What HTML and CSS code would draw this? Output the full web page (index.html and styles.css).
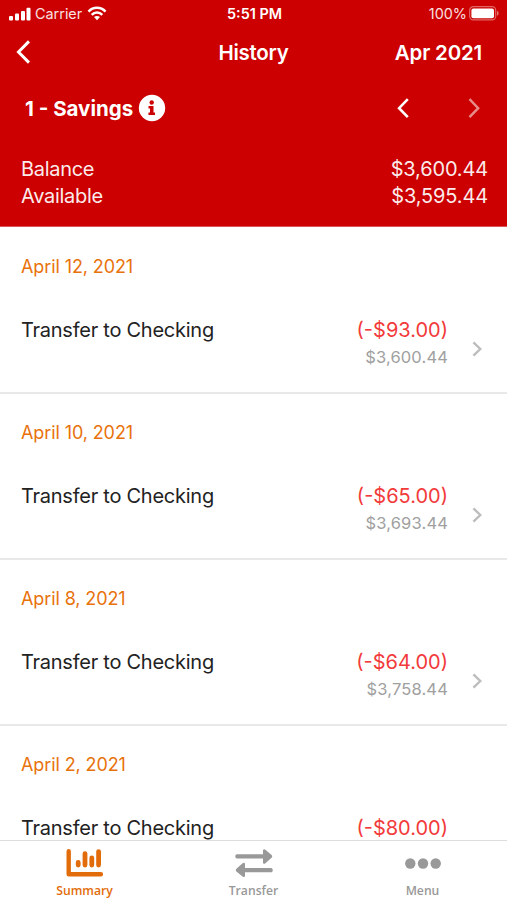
FILE: index.html
```
<!DOCTYPE html>
<html lang="en">
<head>
  <meta charset="UTF-8" />
  <meta name="viewport" content="width=device-width, initial-scale=1.0"/>
  <title>History</title>
  <link rel="stylesheet" href="styles.css">
</head>
<body>
  <header>
    <div class="status-bar">
      <div class="carrier">
        <svg width="22" height="14" viewBox="0 0 22 14" fill="#fff">
          <rect x="0" y="9" width="4" height="4.5" rx="1"/>
          <rect x="6" y="6.5" width="4" height="7" rx="1"/>
          <rect x="12" y="4" width="4" height="9.5" rx="1"/>
          <rect x="17.5" y="0.7" width="4" height="12.8" rx="1"/>
        </svg>
        <span>Carrier</span>
        <svg width="20" height="15" viewBox="0 0 20 15" fill="none" stroke="#fff" stroke-width="2.5">
          <path d="M1.5 5.6C6.2.6 13.8.6 18.5 5.6"/>
          <path d="M4.7 8.8c3-3.1 7.6-3.1 10.6 0"/>
          <path d="M10 14.2l-3-3.1c1.7-1.6 4.3-1.6 6 0z" fill="#fff" stroke="none"/>
        </svg>
      </div>
      <div class="time">5:51 PM</div>
      <div class="battery">
        <span>100%</span>
        <svg width="31" height="15" viewBox="0 0 31 15">
          <rect x="0.7" y="0.7" width="26" height="13.2" rx="3.6" fill="none" stroke="#fff" stroke-opacity=".4" stroke-width="1.2"/>
          <rect x="2.4" y="2.4" width="22.6" height="9.8" rx="2" fill="#fff"/>
          <path d="M28 5v4.7c2.2-.6 2.2-4.1 0-4.7z" fill="#fff" fill-opacity=".45"/>
        </svg>
      </div>
    </div>

    <nav class="nav-bar">
      <svg class="back" width="18" height="26" viewBox="0 0 18 26" fill="none" stroke="#fff" stroke-width="3">
        <path d="M17 2.4L6.5 13 17 23.6"/>
      </svg>
      <h1>History</h1>
      <span class="month">Apr 2021</span>
    </nav>

    <div class="account">
      <h2>1 - Savings</h2>
      <svg class="info" width="28" height="28" viewBox="0 0 28 28">
        <circle cx="14" cy="14" r="13.2" fill="#fff"/>
        <circle cx="13.7" cy="8.5" r="2.2" fill="#c00"/>
        <path d="M10.5 12.1h5v6.4h1.5v2.4h-6.5v-2.4H12v-4h-1.5z" fill="#c00"/>
      </svg>
      <svg class="prev" width="14" height="22" viewBox="0 0 14 22" fill="none" stroke="#fff" stroke-width="2.6">
        <path d="M11.8 2.2L3.1 11.2l8.7 9"/>
      </svg>
      <svg class="next" width="14" height="22" viewBox="0 0 14 22" fill="none" stroke="#fff" stroke-width="2.4">
        <path d="M2.5 2.2l8.7 9-8.7 9"/>
      </svg>
    </div>

    <div class="balances">
      <div><span>Balance</span><span class="money">$3,600.44</span></div>
      <div><span>Available</span><span class="money">$3,595.44</span></div>
    </div>
  </header>

  <main>
    <section class="entry">
      <div class="date">April 12, 2021</div>
      <div class="name">Transfer to Checking</div>
      <div class="amounts"><div class="amount">(-$93.00)</div><div class="total">$3,600.44</div></div>
      <svg class="arrow" width="12" height="18" viewBox="0 0 12 18"><path d="M2.4 2.4L9.3 9l-6.9 6.6"/></svg>
    </section>
    <section class="entry">
      <div class="date">April 10, 2021</div>
      <div class="name">Transfer to Checking</div>
      <div class="amounts"><div class="amount">(-$65.00)</div><div class="total">$3,693.44</div></div>
      <svg class="arrow" width="12" height="18" viewBox="0 0 12 18"><path d="M2.4 2.4L9.3 9l-6.9 6.6"/></svg>
    </section>
    <section class="entry">
      <div class="date">April 8, 2021</div>
      <div class="name">Transfer to Checking</div>
      <div class="amounts"><div class="amount">(-$64.00)</div><div class="total">$3,758.44</div></div>
      <svg class="arrow" width="12" height="18" viewBox="0 0 12 18"><path d="M2.4 2.4L9.3 9l-6.9 6.6"/></svg>
    </section>
    <section class="entry">
      <div class="date">April 2, 2021</div>
      <div class="name">Transfer to Checking</div>
      <div class="amounts"><div class="amount">(-$80.00)</div></div>
    </section>
  </main>

  <footer class="tabs">
    <a class="tab active">
      <svg width="38" height="28" viewBox="0 0 38 28" fill="none" stroke="currentColor" stroke-linecap="round" stroke-linejoin="round">
        <path d="M2.7 2.3v22.9h32.2" stroke-width="4.4"/>
        <path d="M12.2 13.5v2.6M19 4.6v11.5M25.8 9v7.1M32.6 2.6v13.5" stroke-width="4.8"/>
      </svg>
      <span>Summary</span>
    </a>
    <a class="tab">
      <svg width="38" height="28" viewBox="0 0 38 28" fill="currentColor">
        <path d="M2 5.2h26V1.7c0-1.7 1.4-2 2.4-1L36.6 6c.8.8.8 1.9 0 2.7l-6.2 5.6c-1 1-2.4.7-2.4-1V9.5H2c-2.3 0-2.3-4.3 0-4.3z"/>
        <path d="M36 19H10v-3.7c0-1.6-1.4-1.9-2.4-1L1.4 19.8c-.8.8-.8 1.9 0 2.7l6.2 5.1c1 1 2.4.6 2.4-1v-3.3h26c2.3 0 2.3-4.3 0-4.3z"/>
      </svg>
      <span>Transfer</span>
    </a>
    <a class="tab">
      <svg width="38" height="28" viewBox="0 0 38 28" fill="currentColor">
        <circle cx="6.3" cy="14.5" r="5.2"/>
        <circle cx="19" cy="14.5" r="5.2"/>
        <circle cx="31.7" cy="14.5" r="5.2"/>
      </svg>
      <span>Menu</span>
    </a>
  </footer>
</body>
</html>
```
FILE: styles.css
```
* {
  box-sizing: border-box;
}

body {
  display: flex;
  flex-direction: column;
  height: 100vh;
  margin: 0;
  overflow: hidden;
  font-family: Inter, "Liberation Sans", sans-serif;
  font-size: 20px;
  color: #222;
  background: #fff;
}

svg {
  display: block;
  flex: none;
}

header {
  flex: none;
  height: 227px;
  color: #fff;
  background: #c00;
  border-bottom: 1px solid #dc5555;
}

.status-bar {
  display: grid;
  grid-template-columns: 1fr auto 1fr;
  align-items: center;
  height: 27px;
  padding: 0 7px 0 9px;
  font-size: 14.4px;
}

.carrier,
.battery {
  display: flex;
  align-items: center;
  gap: 4px;
}

.carrier span,
.battery span {
  opacity: 0.88;
}

.carrier svg:last-child {
  margin-left: 1px;
}

.battery {
  justify-content: flex-end;
  gap: 2px;
}

.time {
  font-weight: 600;
}

.nav-bar {
  display: grid;
  grid-template-columns: 1fr auto 1fr;
  align-items: center;
  height: 50px;
  padding: 0 12px;
}

h1,
h2,
.month {
  margin: 0;
  font-size: 20.5px;
  font-weight: 600;
}

h1 {
  letter-spacing: -0.3px;
}

.month {
  padding-right: 13px;
  letter-spacing: -0.2px;
  text-align: right;
}

.account {
  display: flex;
  align-items: center;
  height: 62px;
  padding: 0 26px 0 25px;
}

h2 {
  font-weight: 700;
}

.info {
  margin-left: 5px;
}

.prev {
  margin-left: auto;
}

.next {
  margin-left: 57px;
  opacity: 0.55;
}

.balances {
  padding: 17px 19px 0 21px;
  line-height: 27px;
}

.balances div {
  display: flex;
  justify-content: space-between;
}

.balances span {
  letter-spacing: -0.3px;
  opacity: 0.92;
}

.balances .money {
  letter-spacing: -0.15px;
}

main {
  flex: 1;
  min-height: 0;
  padding-top: 1px;
  overflow: hidden;
}

.entry {
  display: grid;
  grid-template-columns: 1fr auto 12px;
  grid-template-rows: 76px auto;
  column-gap: 23px;
  height: 166px;
  padding: 0 24px 0 21px;
  border-bottom: 2px solid #e9e9e9;
}

.date {
  grid-column: 1 / -1;
  padding-top: 27px;
  font-size: 18px;
  letter-spacing: -0.1px;
  line-height: 24px;
  color: #e8720c;
}

.name,
.amount {
  padding-top: 13px;
  line-height: 27px;
}

.name {
  letter-spacing: -0.25px;
}

.amounts {
  text-align: right;
}

.amount {
  color: #f23a3a;
}

.total {
  margin-top: 1px;
  font-size: 16.5px;
  letter-spacing: 0.15px;
  line-height: 24px;
  color: #a0a0a0;
}

.arrow {
  margin-top: 36px;
  fill: none;
  stroke: #bdbdbd;
  stroke-width: 2.4;
}

.tabs {
  display: grid;
  grid-template-columns: repeat(3, 1fr);
  flex: none;
  height: 60px;
  border-top: 1px solid #ddd;
  background: #fff;
}

.tab {
  display: flex;
  flex-direction: column;
  align-items: center;
  padding-top: 8px;
  font-family: "Open Sans", sans-serif;
  font-size: 12.2px;
  font-weight: 600;
  line-height: 18px;
  color: #999;
}

.tab span {
  margin-top: 5px;
}

.tab.active {
  color: #e36c0a;
}
```
